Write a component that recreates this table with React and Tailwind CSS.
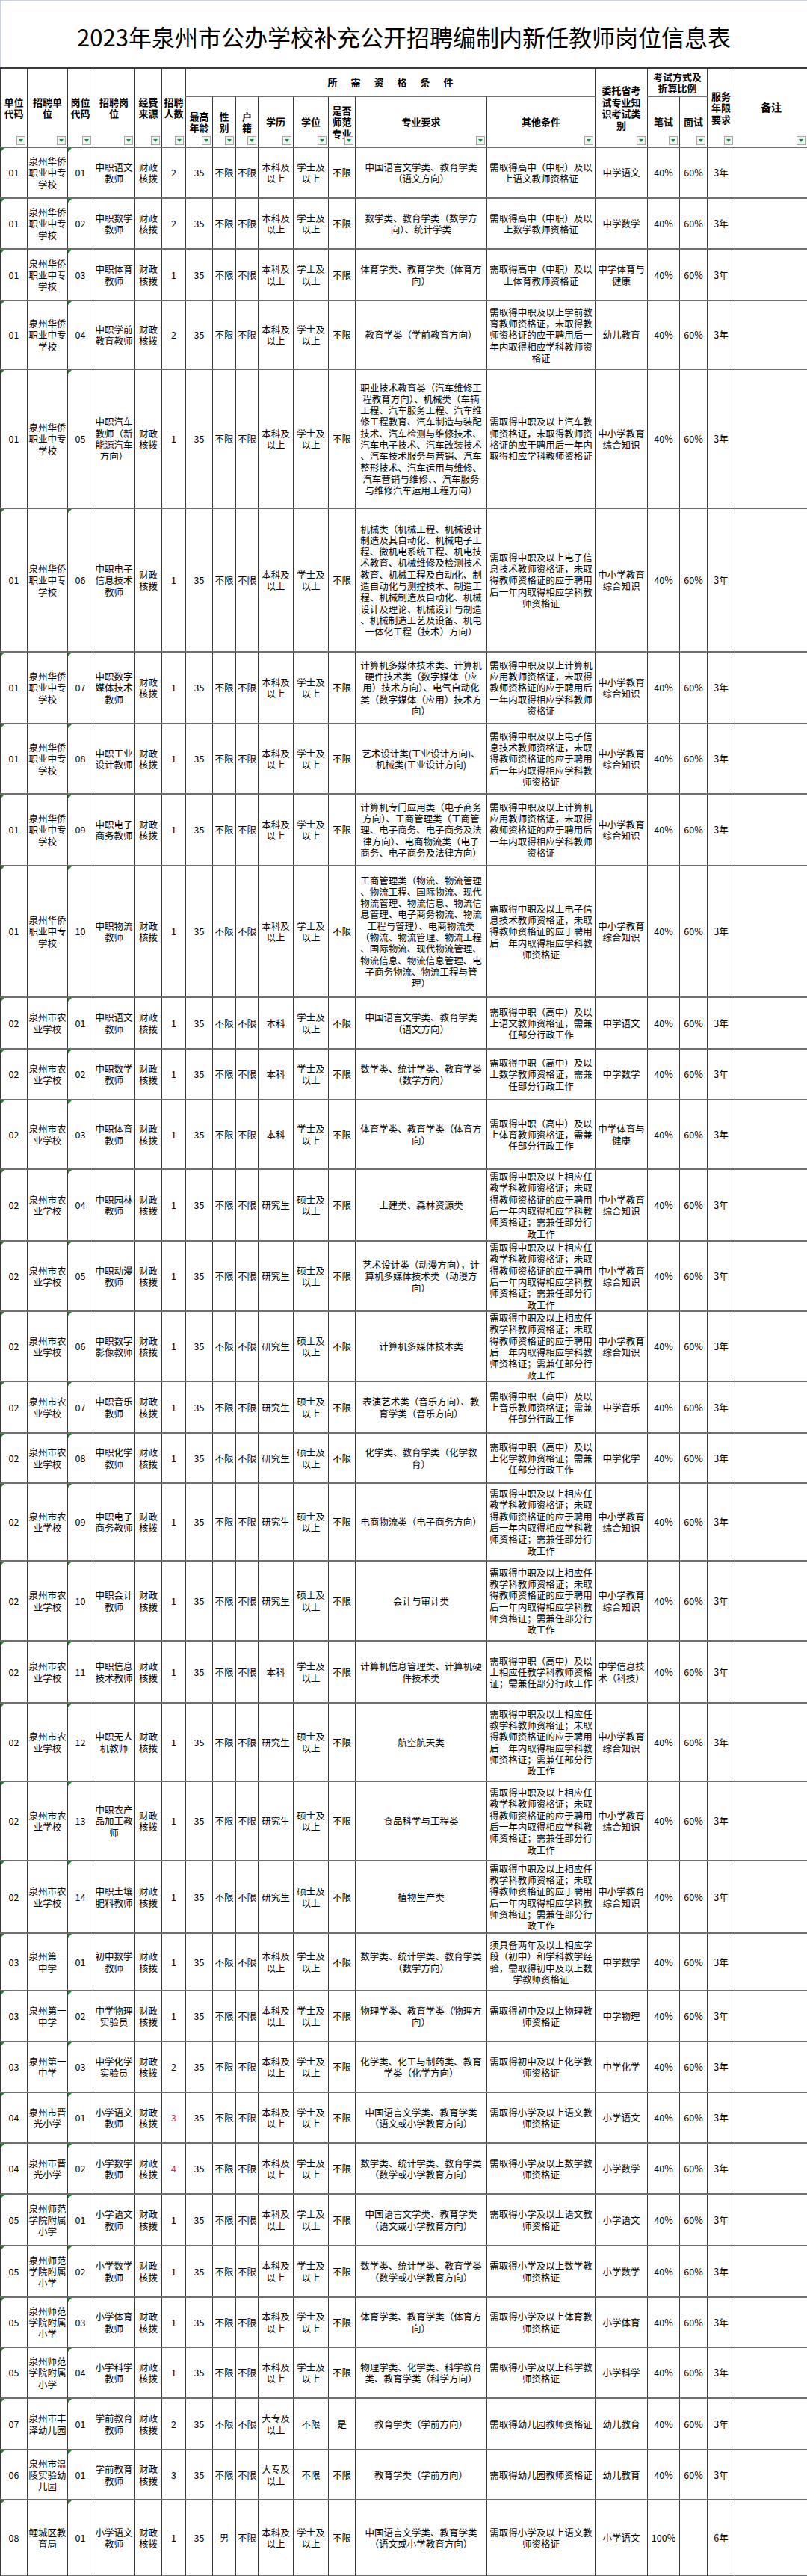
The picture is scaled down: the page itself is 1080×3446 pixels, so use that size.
import React from 'react';

const HQ = ['泉州华侨', '职业中专', '学校'];
const NY = ['泉州市农', '业学校'];
const YZ = ['泉州第一', '中学'];
const JG = ['泉州市晋', '光小学'];
const SF = ['泉州师范', '学院附属', '小学'];
const BK = ['本科及', '以上'];
const BKO = ['本科'];
const YJS = ['研究生'];
const XS = ['学士及', '以上'];
const SS = ['硕士及', '以上'];
const DZ = ['大专及', '以上'];
const ZX = ['中小学教育', '综合知识'];
const T6 = ['需取得中职及以上相应任', '教学科教师资格证；未取', '得教师资格证的应于聘用', '后一年内取得相应学科教', '师资格证；需兼任部分行', '政工作'];
const DZXX = ['需取得中职及以上电子信', '息技术教师资格证，未取', '得教师资格证的应于聘用', '后一年内取得相应学科教', '师资格证'];
const JSJ = ['需取得中职及以上计算机', '应用教师资格证，未取得', '教师资格证的应于聘用后', '一年内取得相应学科教师', '资格证'];

const rows = [
  { h: 'h-[68px]', uc: '01', unit: HQ, pc: '01', pos: ['中职语文', '教师'], n: '2', edu: BK, deg: XS, major: ['中国语言文学类、教育学类', '（语文方向）'], other: ['需取得高中（中职）及以', '上语文教师资格证'], exam: ['中学语文'] },
  { h: 'h-[68px]', uc: '01', unit: HQ, pc: '02', pos: ['中职数学', '教师'], n: '2', edu: BK, deg: XS, major: ['数学类、教育学类（数学方', '向）、统计学类'], other: ['需取得高中（中职）及以', '上数学教师资格证'], exam: ['中学数学'] },
  { h: 'h-[69px]', uc: '01', unit: HQ, pc: '03', pos: ['中职体育', '教师'], n: '1', edu: BK, deg: XS, major: ['体育学类、教育学类（体育方', '向）'], other: ['需取得高中（中职）及以', '上体育教师资格证'], exam: ['中学体育与', '健康'] },
  { h: 'h-[92px]', uc: '01', unit: HQ, pc: '04', pos: ['中职学前', '教育教师'], n: '2', edu: BK, deg: XS, major: ['教育学类（学前教育方向）'], other: ['需取得中职及以上学前教', '育教师资格证，未取得教', '师资格证的应于聘用后一', '年内取得相应学科教师资', '格证'], exam: ['幼儿教育'] },
  { h: 'h-[186px]', uc: '01', unit: HQ, pc: '05', pos: ['中职汽车', '教师（新', '能源汽车', '方向）'], n: '1', edu: BK, deg: XS, major: ['职业技术教育类（汽车维修工', '程教育方向）、机械类（车辆', '工程、汽车服务工程、汽车维', '修工程教育、汽车制造与装配', '技术、汽车检测与维修技术、', '汽车电子技术、汽车改装技术', '、汽车技术服务与营销、汽车', '整形技术、汽车运用与维修、', '汽车营销与维修、、汽车服务', '与维修汽车运用工程方向）'], other: ['需取得中职及以上汽车教', '师资格证，未取得教师资', '格证的应于聘用后一年内', '取得相应学科教师资格证'], exam: ZX },
  { h: 'h-[192px]', uc: '01', unit: HQ, pc: '06', pos: ['中职电子', '信息技术', '教师'], n: '1', edu: BK, deg: XS, major: ['机械类（机械工程、机械设计', '制造及其自动化、机械电子工', '程、微机电系统工程、机电技', '术教育、机械维修及检测技术', '教育、机械工程及自动化、制', '造自动化与测控技术、制造工', '程、机械制造及自动化、机械', '设计及理论、机械设计与制造', '、机械制造工艺及设备、机电', '一体化工程（技术）方向）'], other: DZXX, exam: ZX },
  { h: 'h-[96px]', uc: '01', unit: HQ, pc: '07', pos: ['中职数字', '媒体技术', '教师'], n: '1', edu: BK, deg: XS, major: ['计算机多媒体技术类、计算机', '硬件技术类（数字媒体（应', '用）技术方向）、电气自动化', '类（数字媒体（应用）技术方', '向）'], other: JSJ, exam: ZX },
  { h: 'h-[94px]', uc: '01', unit: HQ, pc: '08', pos: ['中职工业', '设计教师'], n: '1', edu: BK, deg: XS, major: ['艺术设计类(工业设计方向)、', '机械类(工业设计方向)'], other: DZXX, exam: ZX },
  { h: 'h-[96px]', uc: '01', unit: HQ, pc: '09', pos: ['中职电子', '商务教师'], n: '1', edu: BK, deg: XS, major: ['计算机专门应用类（电子商务', '方向）、工商管理类（工商管', '理、电子商务、电子商务及法', '律方向）、电商物流类（电子', '商务、电子商务及法律方向）'], other: JSJ, exam: ZX },
  { h: 'h-[176px]', uc: '01', unit: HQ, pc: '10', pos: ['中职物流', '教师'], n: '1', edu: BK, deg: XS, major: ['工商管理类（物流、物流管理', '、物流工程、国际物流、现代', '物流管理、物流信息、物流信', '息管理、电子商务物流、物流', '工程与管理）、电商物流类', '（物流、物流管理、物流工程', '、国际物流、现代物流管理、', '物流信息、物流信息管理、电', '子商务物流、物流工程与管', '理）'], other: DZXX, exam: ZX },
  { h: 'h-[69px]', uc: '02', unit: NY, pc: '01', pos: ['中职语文', '教师'], n: '1', edu: BKO, deg: XS, major: ['中国语言文学类、教育学类', '（语文方向）'], other: ['需取得中职（高中）及以', '上语文教师资格证，需兼', '任部分行政工作'], exam: ['中学语文'] },
  { h: 'h-[68px]', uc: '02', unit: NY, pc: '02', pos: ['中职数学', '教师'], n: '1', edu: BKO, deg: XS, major: ['数学类、统计学类、教育学类', '（数学方向）'], other: ['需取得中职（高中）及以', '上数学教师资格证，需兼', '任部分行政工作'], exam: ['中学数学'] },
  { h: 'h-[93px]', uc: '02', unit: NY, pc: '03', pos: ['中职体育', '教师'], n: '1', edu: BKO, deg: XS, major: ['体育学类、教育学类（体育方', '向）'], other: ['需取得中职（高中）及以', '上体育教师资格证，需兼', '任部分行政工作'], exam: ['中学体育与', '健康'] },
  { h: 'h-[96px]', uc: '02', unit: NY, pc: '04', pos: ['中职园林', '教师'], n: '1', edu: YJS, deg: SS, major: ['土建类、森林资源类'], other: T6, exam: ZX },
  { h: 'h-[94px]', uc: '02', unit: NY, pc: '05', pos: ['中职动漫', '教师'], n: '1', edu: YJS, deg: SS, major: ['艺术设计类（动漫方向），计', '算机多媒体技术类（动漫方', '向）'], other: T6, exam: ZX },
  { h: 'h-[94px]', uc: '02', unit: NY, pc: '06', pos: ['中职数字', '影像教师'], n: '1', edu: YJS, deg: SS, major: ['计算机多媒体技术类'], other: T6, exam: ZX },
  { h: 'h-[69px]', uc: '02', unit: NY, pc: '07', pos: ['中职音乐', '教师'], n: '1', edu: YJS, deg: SS, major: ['表演艺术类（音乐方向）、教', '育学类（音乐方向）'], other: ['需取得中职（高中）及以', '上音乐教师资格证；需兼', '任部分行政工作'], exam: ['中学音乐'] },
  { h: 'h-[67px]', uc: '02', unit: NY, pc: '08', pos: ['中职化学', '教师'], n: '1', edu: YJS, deg: SS, major: ['化学类、教育学类（化学教', '育）'], other: ['需取得中职（高中）及以', '上化学教师资格证；需兼', '任部分行政工作'], exam: ['中学化学'] },
  { h: 'h-[104px]', uc: '02', unit: NY, pc: '09', pos: ['中职电子', '商务教师'], n: '1', edu: YJS, deg: SS, major: ['电商物流类（电子商务方向）'], other: T6, exam: ZX },
  { h: 'h-[107px]', uc: '02', unit: NY, pc: '10', pos: ['中职会计', '教师'], n: '1', edu: YJS, deg: SS, major: ['会计与审计类'], other: T6, exam: ZX },
  { h: 'h-[83px]', uc: '02', unit: NY, pc: '11', pos: ['中职信息', '技术教师'], n: '1', edu: BKO, deg: XS, major: ['计算机信息管理类、计算机硬', '件技术类'], other: ['需取得中职（高中）及以', '上相应任教学科教师资格', '证；需兼任部分行政工作'], exam: ['中学信息技', '术（科技）'] },
  { h: 'h-[105px]', uc: '02', unit: NY, pc: '12', pos: ['中职无人', '机教师'], n: '1', edu: YJS, deg: SS, major: ['航空航天类'], other: T6, exam: ZX },
  { h: 'h-[106px]', uc: '02', unit: NY, pc: '13', pos: ['中职农产', '品加工教', '师'], n: '1', edu: YJS, deg: SS, major: ['食品科学与工程类'], other: T6, exam: ZX },
  { h: 'h-[97px]', uc: '02', unit: NY, pc: '14', pos: ['中职土壤', '肥料教师'], n: '1', edu: YJS, deg: SS, major: ['植物生产类'], other: T6, exam: ZX },
  { h: 'h-[77px]', uc: '03', unit: YZ, pc: '01', pos: ['初中数学', '教师'], n: '1', edu: BK, deg: XS, major: ['数学类、统计学类、教育学类', '（数学方向）'], other: ['须具备两年及以上相应学', '段（初中）和学科教学经', '验，需取得初中及以上数', '学教师资格证'], exam: ['中学数学'] },
  { h: 'h-[68px]', uc: '03', unit: YZ, pc: '02', pos: ['中学物理', '实验员'], n: '1', edu: BK, deg: XS, major: ['物理学类、教育学类（物理方', '向）'], other: ['需取得初中及以上物理教', '师资格证'], exam: ['中学物理'] },
  { h: 'h-[68px]', uc: '03', unit: YZ, pc: '03', pos: ['中学化学', '实验员'], n: '2', edu: BK, deg: XS, major: ['化学类、化工与制药类、教育', '学类（化学方向）'], other: ['需取得初中及以上化学教', '师资格证'], exam: ['中学化学'] },
  { h: 'h-[68px]', uc: '04', unit: JG, pc: '01', pos: ['小学语文', '教师'], n: '3', red: true, edu: BK, deg: XS, major: ['中国语言文学类、教育学类', '（语文或小学教育方向）'], other: ['需取得小学及以上语文教', '师资格证'], exam: ['小学语文'] },
  { h: 'h-[68px]', uc: '04', unit: JG, pc: '02', pos: ['小学数学', '教师'], n: '4', red: true, edu: BK, deg: XS, major: ['数学类、统计学类、教育学类', '（数学或小学教育方向）'], other: ['需取得小学及以上数学教', '师资格证'], exam: ['小学数学'] },
  { h: 'h-[69px]', uc: '05', unit: SF, pc: '01', pos: ['小学语文', '教师'], n: '1', edu: BK, deg: XS, major: ['中国语言文学类、教育学类', '（语文或小学教育方向）'], other: ['需取得小学及以上语文教', '师资格证'], exam: ['小学语文'] },
  { h: 'h-[69px]', uc: '05', unit: SF, pc: '02', pos: ['小学数学', '教师'], n: '1', edu: BK, deg: XS, major: ['数学类、统计学类、教育学类', '（数学或小学教育方向）'], other: ['需取得小学及以上数学教', '师资格证'], exam: ['小学数学'] },
  { h: 'h-[67px]', uc: '05', unit: SF, pc: '03', pos: ['小学体育', '教师'], n: '1', edu: BK, deg: XS, major: ['体育学类、教育学类（体育方', '向）'], other: ['需取得小学及以上体育教', '师资格证'], exam: ['小学体育'] },
  { h: 'h-[68px]', uc: '05', unit: SF, pc: '04', pos: ['小学科学', '教师'], n: '1', edu: BK, deg: XS, major: ['物理学类、化学类、科学教育', '类、教育学类（科学方向）'], other: ['需取得小学及以上科学教', '师资格证'], exam: ['小学科学'] },
  { h: 'h-[69px]', uc: '07', unit: ['泉州市丰', '泽幼儿园'], pc: '01', pos: ['学前教育', '教师'], n: '2', edu: DZ, deg: ['不限'], normal: '是', major: ['教育学类（学前方向）'], other: ['需取得幼儿园教师资格证'], exam: ['幼儿教育'] },
  { h: 'h-[67px]', uc: '06', unit: ['泉州市温', '陵实验幼', '儿园'], pc: '01', pos: ['学前教育', '教师'], n: '3', edu: DZ, deg: ['不限'], major: ['教育学类（学前方向）'], other: ['需取得幼儿园教师资格证'], exam: ['幼儿教育'] },
  { h: 'h-[102px]', uc: '08', unit: ['鲤城区教', '育局'], pc: '01', pos: ['小学语文', '教师'], n: '1', gender: '男', edu: BK, deg: XS, major: ['中国语言文学类、教育学类', '（语文或小学教育方向）'], other: ['需取得小学及以上语文教', '师资格证'], exam: ['小学语文'], w: '100%', i: '', y: '6年' },
];

const cell = 'border-r border-b-2 border-r-[#3a3a3a] border-b-[#6e6e6e] text-center align-middle whitespace-nowrap p-0';

function Lines({ l }) {
  return (
    <>
      {l.map((t, k) => (
        <div key={k}>{t}</div>
      ))}
    </>
  );
}

function Filter() {
  return (
    <span className="absolute right-[2px] bottom-[2px] w-[12px] h-[12px] border border-[#a9a9a9] bg-[#f4f4f4] flex items-center justify-center">
      <span className="w-0 h-0 border-l-[3px] border-r-[3px] border-t-[4px] border-l-transparent border-r-transparent border-t-[#15883e]" />
    </span>
  );
}

function Tri() {
  return <span className="absolute left-0 top-0 w-0 h-0 border-t-[5px] border-r-[5px] border-t-[#1b8a2f] border-r-transparent" />;
}

function H({ children, rs, cs, cls = '', filter = true }) {
  return (
    <th rowSpan={rs} colSpan={cs} className={`relative border-r border-b-2 border-r-[#3a3a3a] border-b-[#6e6e6e] text-center align-middle whitespace-nowrap p-0 font-bold text-[13px] leading-[15.5px] ${cls}`}>
      {children}
      {filter && <Filter />}
    </th>
  );
}

export default function App() {
  return (
    <div className="w-[1080px] bg-white text-black font-['Noto_Sans_CJK_SC','Noto_Sans',sans-serif]">
      <div className="h-[90px] flex items-center justify-center pt-[6px] border-t border-l border-[#c9cfdc]">
        <div className="text-[31px] leading-[36px]">2023年泉州市公办学校补充公开招聘编制内新任教师岗位信息表</div>
      </div>
      <table className="table-fixed border-collapse w-[1080px] border-t-2 border-l border-t-[#3a3a3a] border-l-[#3a3a3a]">
        <colgroup>
          <col className="w-[36px]" />
          <col className="w-[54px]" />
          <col className="w-[34px]" />
          <col className="w-[56px]" />
          <col className="w-[36px]" />
          <col className="w-[32px]" />
          <col className="w-[36px]" />
          <col className="w-[31px]" />
          <col className="w-[30px]" />
          <col className="w-[47px]" />
          <col className="w-[47px]" />
          <col className="w-[36px]" />
          <col className="w-[176px]" />
          <col className="w-[145px]" />
          <col className="w-[70px]" />
          <col className="w-[43px]" />
          <col className="w-[37px]" />
          <col className="w-[37px]" />
          <col className="w-[97px]" />
        </colgroup>
        <thead>
          <tr className="h-[38px]">
            <H rs={2}><div>单位</div><div>代码</div></H>
            <H rs={2}><div>招聘单</div><div>位</div></H>
            <H rs={2}><div>岗位</div><div>代码</div></H>
            <H rs={2}><div>招聘岗</div><div>位</div></H>
            <H rs={2}><div>经费</div><div>来源</div></H>
            <H rs={2}><div>招聘</div><div>人数</div></H>
            <H cs={8} filter={false} cls="tracking-[18px] pl-[18px]">所需资格条件</H>
            <H rs={2}><div>委托省考</div><div>试专业知</div><div>识考试类</div><div>别</div></H>
            <H cs={2} filter={false}><div>考试方式及</div><div>折算比例</div></H>
            <H rs={2}><div>服务</div><div>年限</div><div>要求</div></H>
            <H rs={2} cls="text-[14px]">备注</H>
          </tr>
          <tr className="h-[68px]">
            <H><div>最高</div><div>年龄</div></H>
            <H><div>性</div><div>别</div></H>
            <H><div>户</div><div>籍</div></H>
            <H>学历</H>
            <H>学位</H>
            <H><div>是否</div><div>师范</div><div>专业</div></H>
            <H>专业要求</H>
            <H>其他条件</H>
            <H>笔试</H>
            <H>面试</H>
          </tr>
        </thead>
        <tbody className="text-[12.5px] leading-[15.3px]">
          {rows.map((r, idx) => (
            <tr key={idx} className={r.h}>
              <td className={`${cell} relative`}><Tri />{r.uc}</td>
              <td className={cell}><Lines l={r.unit} /></td>
              <td className={`${cell} relative`}><Tri />{r.pc}</td>
              <td className={cell}><Lines l={r.pos} /></td>
              <td className={cell}><div>财政</div><div>核拨</div></td>
              <td className={`${cell} ${r.red ? 'text-[#ff1a1a]' : ''}`}>{r.n}</td>
              <td className={cell}>35</td>
              <td className={cell}>{r.gender || '不限'}</td>
              <td className={cell}>不限</td>
              <td className={cell}><Lines l={r.edu} /></td>
              <td className={cell}><Lines l={r.deg} /></td>
              <td className={cell}>{r.normal || '不限'}</td>
              <td className={cell}><Lines l={r.major} /></td>
              <td className={cell}><Lines l={r.other} /></td>
              <td className={cell}><Lines l={r.exam} /></td>
              <td className={cell}>{r.w || '40%'}</td>
              <td className={cell}>{r.i !== undefined ? r.i : '60%'}</td>
              <td className={cell}>{r.y || '3年'}</td>
              <td className={cell}></td>
            </tr>
          ))}
        </tbody>
      </table>
    </div>
  );
}
